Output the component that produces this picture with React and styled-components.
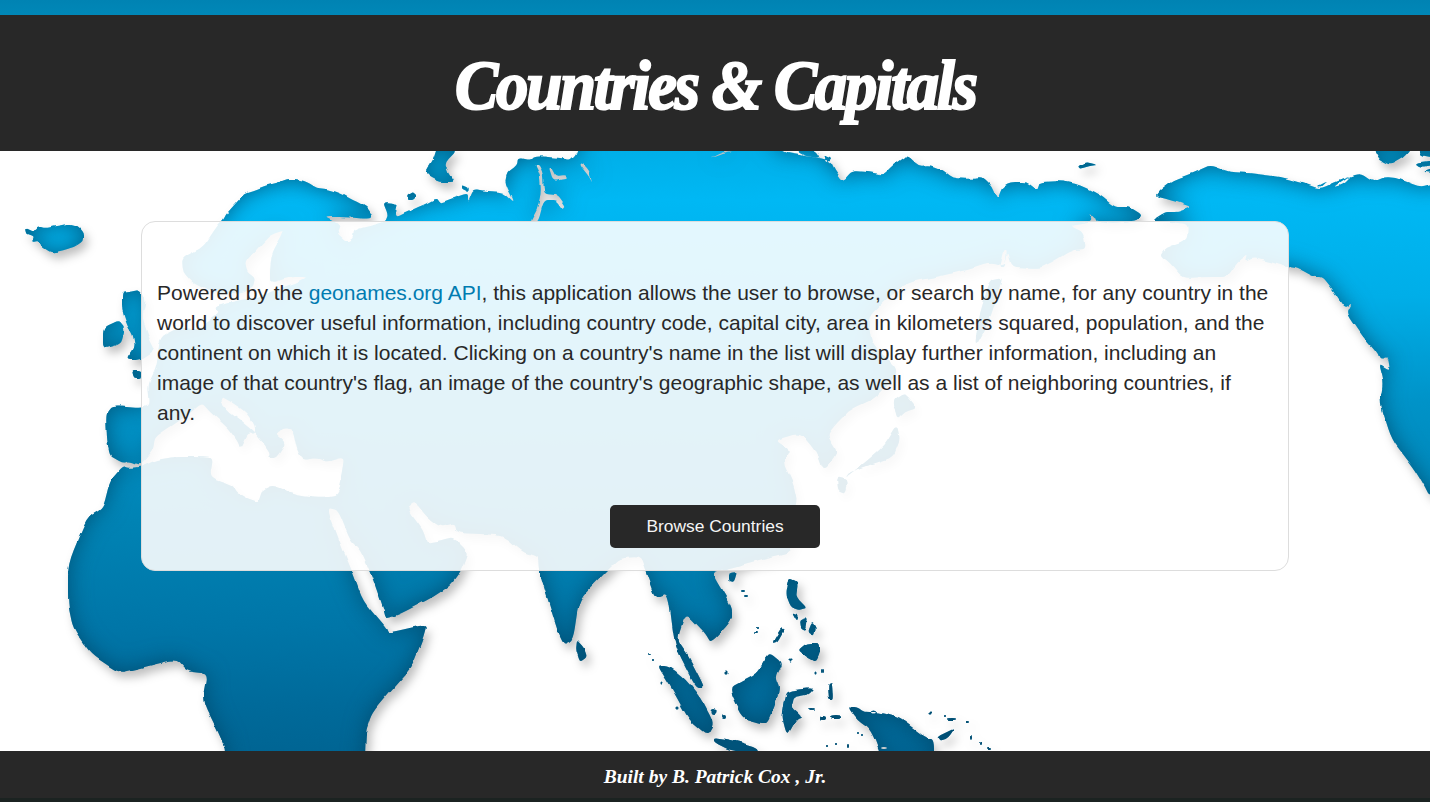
import React from 'react'
import styled, { createGlobalStyle } from 'styled-components'

const GlobalStyle = createGlobalStyle`
  html, body {
    margin: 0;
    padding: 0;
    background: #fff;
    color: #282828;
    font-family: "Liberation Sans", Arial, sans-serif;
  }
`

const Page = styled.div`
  position: relative;
  height: 802px;
  overflow: hidden;
  display: flex;
  flex-direction: column;
  padding-top: 15px;
  box-sizing: border-box;
`

const MapLayer = styled.svg`
  position: absolute;
  top: 0;
  left: 0;
  width: 1430px;
  height: 802px;
`

const Header = styled.header`
  position: relative;
  height: 136px;
  background: #282828;
  display: flex;
  align-items: center;
  justify-content: center;
`

const Title = styled.h1`
  margin: 6px 0 0;
  font-family: "Liberation Serif", serif;
  font-style: italic;
  font-weight: 700;
  font-size: 70px;
  letter-spacing: -2.4px;
  color: #fff;
  -webkit-text-stroke: 2.2px #fff;
  transform: scaleX(0.925);
`

const Main = styled.main`
  position: relative;
  flex: 1;
  padding: 70px 141px 0;
`

const Panel = styled.section`
  box-sizing: border-box;
  height: 350px;
  padding: 56px 15px 22px;
  display: flex;
  flex-direction: column;
  background: rgba(255, 255, 255, 0.89);
  border: 1px solid #ddd;
  border-radius: 14px;
`

const Intro = styled.p`
  margin: 0;
  font-size: 21px;
  line-height: 30px;
  color: #282828;
`

const Link = styled.a`
  color: #007bb0;
  text-decoration: none;
`

const Browse = styled.button`
  margin: auto auto 0;
  width: 210px;
  height: 43px;
  border: 0;
  border-radius: 5px;
  background: #282828;
  color: #f5f5f5;
  font-family: "Liberation Sans", Arial, sans-serif;
  font-size: 17.4px;
`

const Footer = styled.footer`
  position: relative;
  height: 47px;
  background: #282828;
  display: flex;
  align-items: center;
  justify-content: center;
`

const Credit = styled.p`
  margin: 4px 0 0;
  font-family: "Liberation Serif", serif;
  font-style: italic;
  font-weight: 700;
  font-size: 19.5px;
  color: #fff;
`

const Ground = styled.div`
  position: relative;
  height: 4px;
  background: #1b2321;
`

// closed outline with its corners rounded off a little
const poly = s => {
  const pts = s.trim().split(/\s+/).map(p => p.split(',').map(Number))
  const at = (a, b, t) => `${(a[0] + (b[0] - a[0]) * t).toFixed(1)},${(a[1] + (b[1] - a[1]) * t).toFixed(1)}`
  return pts
    .map((p, i) => {
      const prev = pts[(i + pts.length - 1) % pts.length]
      const next = pts[(i + 1) % pts.length]
      return `${i ? 'L' : 'M'}${at(p, prev, 0.3)}Q${p[0]},${p[1]} ${at(p, next, 0.3)}`
    })
    .join('') + 'Z'
}
const dot = (x, y, rx, ry = rx) =>
  `M${x - rx},${y}A${rx},${ry} 0 1 0 ${x + rx},${y}A${rx},${ry} 0 1 0 ${x - rx},${y}Z`

const eurasiaAfrica = poly(`
  223,220 227,213 237,202 245,193 257,189 267,185 277,183 287,179 297,179 307,182 317,188 327,189
  340,193 353,200 367,207 372,215 370,219 345,217 325,217 340,224 337,233 347,242 353,238 354,230
  385,222 388,215 383,202 397,203 395,212 397,217 407,212 423,205 437,198 440,203 453,198 468,193
  468,202 473,189 487,191 503,192 515,203 505,183 507,173 517,165 518,158 530,160 538,156 560,158
  570,160 577,153 590,100 770,100 775,151 830,160 835,170 843,181 852,171 870,172 883,175 893,165
  907,155 919,166 930,165 943,170 953,178 970,179 983,178 992,187 997,200 1002,188 1010,183 1027,183
  1037,191 1040,182 1063,181 1080,185 1100,195 1112,205 1117,207 1130,207 1142,215 1137,220 1115,223
  1097,221 1090,213 1093,222 1070,226 1083,232 1086,249 1072,250 1052,262 1040,268 1012,267 1008,250
  1005,267 990,263 967,270 945,275 907,283 885,300 868,318 872,345 900,370 877,397 850,410 837,423
  827,435 838,453 823,472 815,450 800,433 775,440 790,450 783,463 793,483 797,500 793,515 795,540
  790,552 770,557 733,567 714,572 714,577 732,607 732,620 711,643 705,633 686,613 677,640 689,657
  705,688 696,688 675,647 668,593 655,598 646,573 640,557 620,558 607,571 579,600 573,640 562,645
  539,571 538,557 523,552 503,535 457,533 455,523 440,527 427,517 415,502 408,507 410,513 423,530
  427,543 442,540 453,537 468,552 461,571 450,586 431,598 400,614 386,619 383,608 370,571 360,550
  350,540 338,510 327,508 343,550 352,571 363,601 386,628 388,633 427,624 422,641 411,668 393,688
  372,713 365,734 365,860 226,860 226,751 219,734 203,701 208,674 187,671 176,659 141,668 119,673
  91,654 73,628 68,604 68,564 87,518 103,508 110,481 123,466 130,468 140,467 157,460 173,457 200,457
  213,458 210,477 232,485 237,492 247,498 258,502 262,490 273,485 297,495 322,497 338,495 343,473
  345,457 327,462 317,458 303,460 297,450 293,430 285,428 275,433 287,443 277,458 268,457 270,453
  265,445 255,433 240,420 230,413 220,402 222,397 233,403 247,413 255,427 255,435 247,433 240,448
  238,442 228,428 210,412 202,403 190,413 173,425 155,437 153,450 147,457 140,465 130,461 123,463
  110,456 107,441 106,413 112,406 141,408 150,405 148,385 155,370 157,363 160,337 180,327 197,330
  220,313 213,307 240,300 260,297 275,290 295,283 308,277 290,277 270,283 270,270 272,253 285,230
  270,235 258,248 245,262 247,272 255,278 253,287 240,293 218,293 207,290 193,283 183,272 182,258
  203,247 218,225
`)

const northAmerica = poly(`
  1155,196 1160,190 1173,180 1193,173 1210,165 1230,172 1250,173 1280,177 1303,183 1320,189 1340,180
  1360,173 1373,182 1385,177 1397,178 1420,187 1435,183 1500,183 1500,497 1430,497 1423,483 1413,467
  1392,440 1380,403 1383,383 1378,363 1390,370 1388,358 1380,360 1377,353 1363,337 1347,313 1352,303
  1345,308 1333,290 1323,277 1313,277 1297,268 1288,267 1263,260 1253,258 1245,262 1247,255 1237,263
  1227,277 1207,277 1183,278 1170,263 1160,255 1165,248 1187,240 1188,224 1170,222 1153,220 1165,212
  1178,212 1191,207 1180,203 1170,200
`)

// inlets cut out of the land with evenodd
const inlets = [
  '535,165 540,175 541,193 537,210 530,222 538,222 544,200 556,200 563,210 566,206 557,194 544,193 543,175 539,165',
  '549,168 553,180 567,178 566,175 556,176 552,168',
  '580,165 590,178 592,183 589,170 582,163',
  '708,158 722,153 735,150 723,151',
  '1000,268 1004,250 1007,250 1005,268',
].map(poly)

const islands = [
  // Iceland, Britain, Ireland
  '26,227 34,231 38,226 46,228 56,226 68,224 78,227 83,233 83,241 76,246 68,249 52,253 42,247 39,241 32,242 34,236 27,234',
  '122,292 128,291 140,289 146,300 142,318 150,340 155,350 140,360 126,360 135,347 133,335 127,325 122,310',
  '103,328 119,320 125,328 121,343 103,348',
  '132,371 141,371 141,378 134,378',
  // arctic
  '437,148 457,150 445,163 448,173 455,182 440,182 430,177 425,172 433,160',
  '462,185 468,188 467,191 462,189',
  '407,196 413,192 417,196 413,200 408,200',
  '1078,166 1087,162 1097,165 1089,166 1080,169',
  '797,148 815,150 820,158 806,156 799,152',
  '823,154 832,158 826,163',
  '1373,148 1412,148 1403,158 1390,165 1380,160',
  '1418,148 1434,148 1434,158 1420,155',
  '1415,163 1434,160 1434,165 1420,167',
  '1423,172 1434,168 1434,173',
  '1318,185 1328,180 1320,187',
  '1333,187 1352,175 1342,185',
  // Sakhalin, Japan
  '990,280 1003,277 995,300 985,330 975,347 978,320',
  '893,400 905,393 917,408 905,412 897,420',
  '897,425 900,440 893,457 870,465 850,472 845,478 868,460 885,445',
  '837,477 847,480 845,493 838,490',
  // Sri Lanka, Hainan
  '577,640 584,648 587,657 580,662 576,650',
  '729,573 737,572 734,582 729,581',
  // Sumatra, Java, Borneo
  '657,665 671,667 686,680 700,697 714,723 707,735 689,720 671,687',
  '714,737 732,740 757,747 759,755 729,750 714,742',
  '770,653 782,663 775,677 780,690 768,723 761,723 743,718 729,688 743,680 757,673 764,660',
  // Sulawesi, Philippines
  '793,690 814,688 807,695 793,697 791,707 802,717 796,720 789,733 786,732 782,717 786,693',
  '789,578 798,582 796,597 807,608 798,610 791,607 786,595',
  '807,643 820,643 820,653 816,662 807,657 798,650',
  '773,643 782,628 785,630 778,642',
  '791,613 798,616 796,622',
  '800,620 808,618 806,630 801,628',
  '812,622 816,628 814,636 808,632',
  // New Guinea and around
  '857,707 864,712 879,712 900,718 925,737 934,740 934,770 886,770 871,730 857,720 848,707',
  '937,737 955,728 948,738 940,741',
  '829,700 828,684 832,683 833,700',
].map(poly)

const specks = [
  [743, 591, 2, 1], [746, 596, 2, 1], [755, 633, 2, 1], [757, 628, 1], [650, 655, 2, 1], [654, 660, 1],
  [662, 682, 1.5], [677, 707, 1.5], [726, 673, 1.5], [714, 712, 2.5, 3], [724, 717, 2], [816, 673, 1.5],
  [823, 671, 1, 2], [791, 660, 1.5], [812, 709, 3, 1], [823, 718, 3, 2], [836, 717, 6, 2], [873, 712, 3, 1.5],
  [930, 713, 1.5], [946, 717, 1], [952, 720, 4, 1], [968, 722, 2, 1], [971, 738, 1, 3], [980, 743, 1, 2],
  [989, 748, 2, 1], [857, 733, 1], [862, 735, 1], [827, 746, 1], [836, 743, 1], [848, 746, 1, 2],
  [884, 748, 3, 1],
].map(s => dot(...s))

const landPath = [eurasiaAfrica, northAmerica, ...inlets, ...islands, ...specks].join('')

const WorldMap = () => (
  <MapLayer viewBox="0 0 1430 802" aria-hidden="true">
    <defs>
      <linearGradient id="sea-depth" gradientUnits="userSpaceOnUse" x1="0" y1="0" x2="0" y2="802">
        <stop offset="0" stopColor="#0083b3" />
        <stop offset="0.02" stopColor="#0088b8" />
        <stop offset="0.12" stopColor="#00a5dc" />
        <stop offset="0.25" stopColor="#00b8f4" />
        <stop offset="0.37" stopColor="#00aee8" />
        <stop offset="0.5" stopColor="#0093c8" />
        <stop offset="0.65" stopColor="#0083b4" />
        <stop offset="0.78" stopColor="#0076a8" />
        <stop offset="0.88" stopColor="#006a9a" />
        <stop offset="1" stopColor="#005f8c" />
      </linearGradient>
      <filter
        id="coast"
        filterUnits="userSpaceOnUse"
        x="-100"
        y="0"
        width="1700"
        height="950"
        colorInterpolationFilters="sRGB"
      >
        <feTurbulence type="fractalNoise" baseFrequency="0.08" numOctaves="2" seed="4" result="noise" />
        <feDisplacementMap in="SourceGraphic" in2="noise" scale="4" xChannelSelector="R" yChannelSelector="G" result="rough" />
        <feComponentTransfer in="rough" result="inverse">
          <feFuncA type="table" tableValues="1 0" />
        </feComponentTransfer>
        <feGaussianBlur in="inverse" stdDeviation="11" result="soft" />
        <feComposite in="soft" in2="rough" operator="in" result="edge" />
        <feFlood floodColor="#00405f" floodOpacity="0.7" />
        <feComposite in2="edge" operator="in" result="inner" />
        <feGaussianBlur in="rough" stdDeviation="5" />
        <feOffset dx="4" dy="6" result="drop" />
        <feFlood floodColor="#000" floodOpacity="0.25" />
        <feComposite in2="drop" operator="in" result="outer" />
        <feMerge>
          <feMergeNode in="outer" />
          <feMergeNode in="rough" />
          <feMergeNode in="inner" />
        </feMerge>
      </filter>
    </defs>
    <rect x="0" y="0" width="1430" height="20" fill="url(#sea-depth)" />
    <path d={landPath} fill="url(#sea-depth)" fillRule="evenodd" filter="url(#coast)" />
  </MapLayer>
)

const App = () => (
  <Page>
    <GlobalStyle />
    <WorldMap />
    <Header>
      <Title>Countries &amp; Capitals</Title>
    </Header>
    <Main>
      <Panel>
        <Intro>
          Powered by the <Link href="#">geonames.org API</Link>, this application allows the user to browse, or
          search by name, for any country in the world to discover useful information, including country code,
          capital city, area in kilometers squared, population, and the continent on which it is located. Clicking
          on a country's name in the list will display further information, including an image of that country's
          flag, an image of the country's geographic shape, as well as a list of neighboring countries, if any.
        </Intro>
        <Browse>Browse Countries</Browse>
      </Panel>
    </Main>
    <Footer>
      <Credit>Built by B. Patrick Cox , Jr.</Credit>
    </Footer>
    <Ground />
  </Page>
)

export default App
